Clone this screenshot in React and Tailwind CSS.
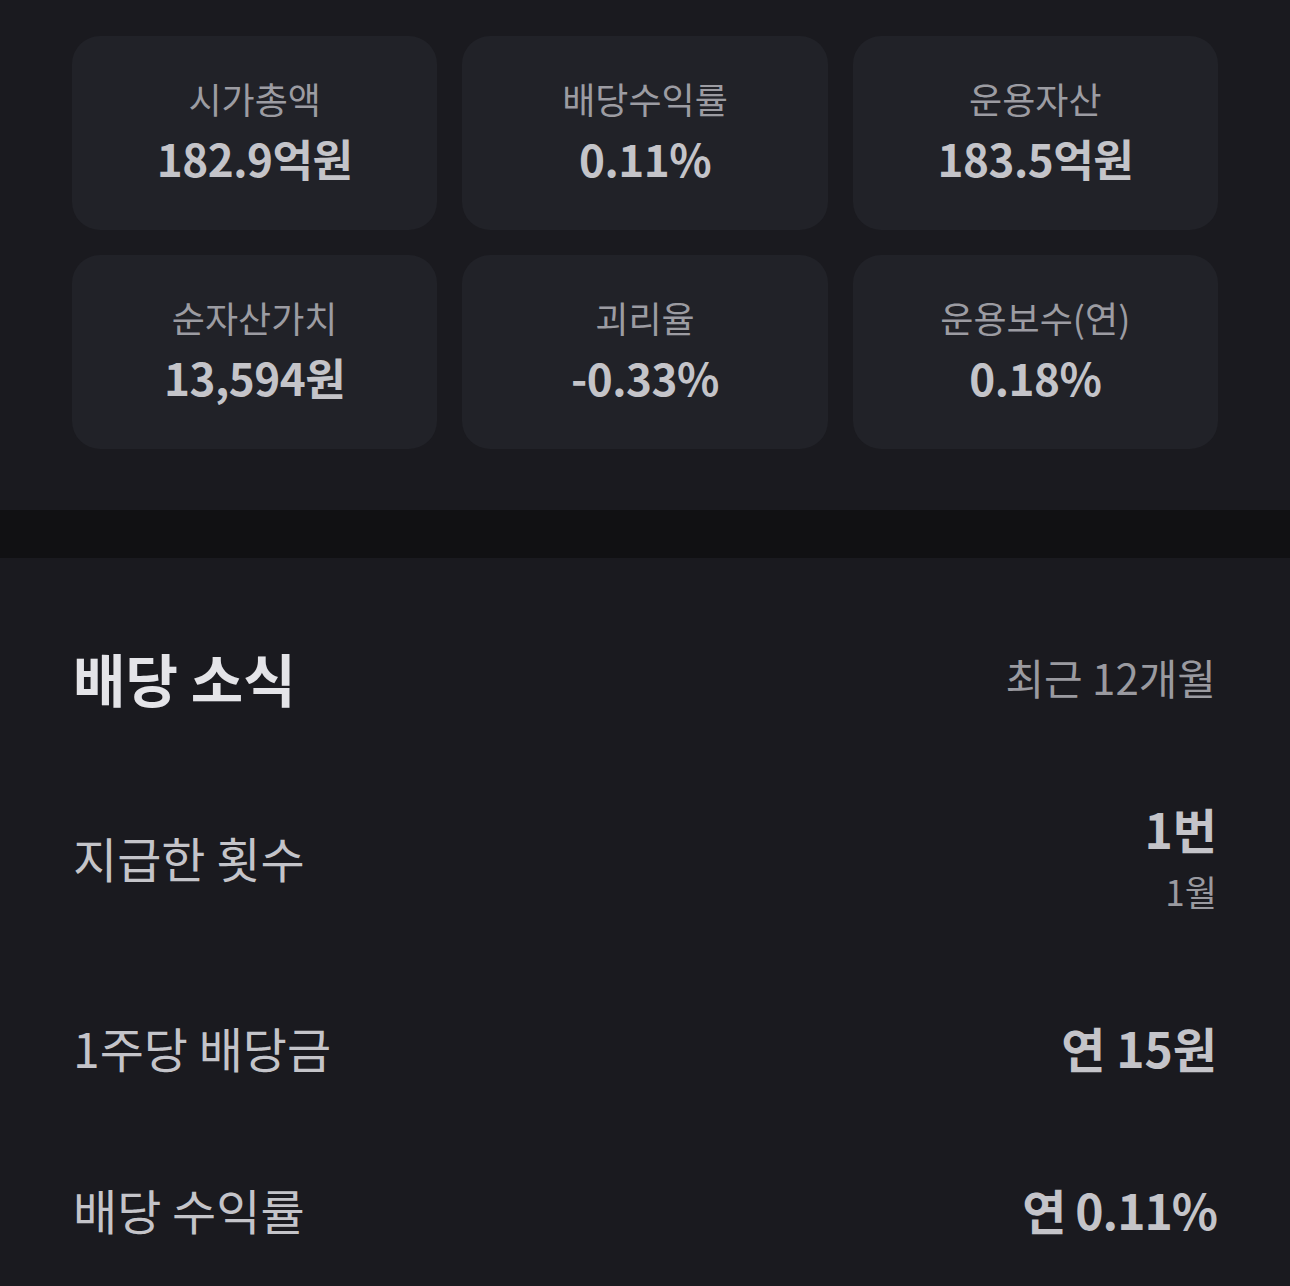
const font = { fontFamily: '"Noto Sans CJK KR", "Noto Sans", sans-serif' };

const stats = [
  { label: "시가총액", value: "182.9억원" },
  { label: "배당수익률", value: "0.11%" },
  { label: "운용자산", value: "183.5억원" },
  { label: "순자산가치", value: "13,594원" },
  { label: "괴리율", value: "-0.33%" },
  { label: "운용보수(연)", value: "0.18%" },
];

function StatCard({ label, value }) {
  return (
    <div className="h-[194px] pb-[5px] rounded-[28px] bg-[#212228] flex flex-col items-center justify-center gap-[13px]">
      <div className="text-[36px] leading-[42px] text-[#9c9ca2]">{label}</div>
      <div className="text-[44px] leading-[52px] font-bold text-[#c4c4c9] tracking-[-0.5px]">{value}</div>
    </div>
  );
}

function Row({ label, children }) {
  return (
    <div className="flex items-center justify-between">
      <div className="text-[48px] leading-[52px] text-[#c4c4c9]">{label}</div>
      <div className="flex flex-col items-end">{children}</div>
    </div>
  );
}

export default function App() {
  return (
    <div className="w-[1290px] h-[1286px] overflow-hidden bg-[#1a1a1f]" style={font}>
      <div className="px-[72px] pt-[36px] pb-[61px]">
        <div className="grid grid-cols-3 gap-[25px]">
          {stats.map((s) => (
            <StatCard key={s.label} label={s.label} value={s.value} />
          ))}
        </div>
      </div>

      <div className="h-[48px] bg-[#111113]"></div>

      <div className="px-[73px] pt-[92px] flex flex-col">
        <div className="flex items-center justify-between">
          <div className="text-[57px] leading-[54px] font-bold text-[#e4e4e8]">배당 소식</div>
          <div className="text-[42px] leading-[54px] text-[#9a9aa0] pr-[1px]">최근 12개월</div>
        </div>

        <div className="mt-[98px] flex flex-col gap-[110px]">
          <Row label="지급한 횟수">
            <div className="text-[48px] leading-[52px] font-bold text-[#c4c4c9]">1번</div>
            <div className="mt-[17px] text-[35px] leading-[40px] text-[#9a9aa0]">1월</div>
          </Row>
          <Row label="1주당 배당금">
            <div className="text-[48px] leading-[52px] font-bold text-[#c4c4c9]">연 15원</div>
          </Row>
          <Row label="배당 수익률">
            <div className="text-[48px] leading-[52px] font-bold text-[#c4c4c9] tracking-[-1px]">연 0.11%</div>
          </Row>
        </div>
      </div>
    </div>
  );
}
